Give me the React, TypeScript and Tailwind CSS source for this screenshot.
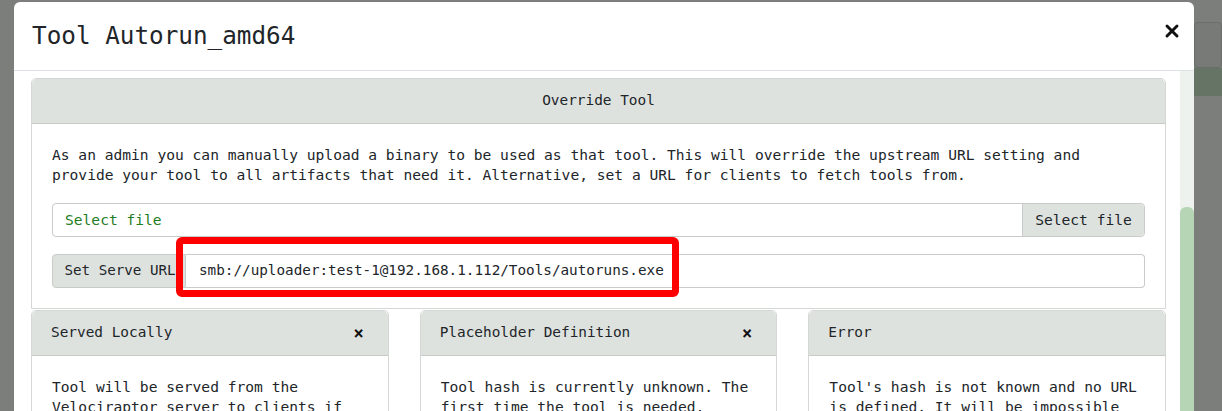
import { X } from "lucide-react";

const mono = { fontFamily: '"DejaVu Sans Mono", "Liberation Mono", monospace' };

const notes = [
  {
    title: "Served Locally",
    closable: true,
    text: "Tool will be served from the Velociraptor server to clients if needed. The client will fetch the tool",
  },
  {
    title: "Placeholder Definition",
    closable: true,
    text: "Tool hash is currently unknown. The first time the tool is needed, Velociraptor will download it",
  },
  {
    title: "Error",
    closable: false,
    text: "Tool's hash is not known and no URL is defined. It will be impossible to use this tool",
  },
];

function NoteCard({ title, closable, text }: { title: string; closable: boolean; text: string }) {
  return (
    <div className="flex-1 border border-[#d4d7d4] rounded-t-[5px] bg-white">
      <div className="h-[45px] flex items-center justify-between px-[19px] bg-[#dee2df] border-b border-[#c8cbc8] rounded-t-[5px]">
        <span className="text-[14.4px] text-[#212529]">{title}</span>
        {closable && <span className="text-[17px] font-bold leading-none text-[#111] mr-[5px]">×</span>}
      </div>
      <div className="px-[20px] pt-[21px] text-[14.6px] leading-[20px] text-[#212529]">{text}</div>
    </div>
  );
}

export default function App() {
  return (
    <div className="relative w-[1222px] h-[411px] overflow-hidden bg-[#7b7e7a]" style={mono}>
      <div className="absolute right-0 top-[22px] w-[28px] h-[46px] border border-[#6a6d69] rounded-[4px] bg-[#777a76]" />
      <div className="absolute right-0 top-[68px] w-[28px] h-[28px] bg-[#667466]" />
      <div className="relative ml-[14px] mt-[2px] w-[1180px] h-[409px] bg-white rounded-t-[6px] flex flex-col">
        <div className="h-[69px] shrink-0 flex items-center justify-between pl-[18px] pr-[12px] border-b border-[#dee2e6]">
          <h1 className="text-[24.3px] text-[#212529] leading-none">Tool Autorun_amd64</h1>
          <X size={20} strokeWidth={3.5} className="text-[#111] mb-[10px]" />
        </div>
        <div className="flex flex-1 min-h-0">
          <div className="flex-1 pl-[17px] pr-[14px] pt-[7px] overflow-hidden">
            <div className="border border-[#d4d7d4] rounded-t-[5px]">
              <div className="h-[45px] flex items-center justify-center bg-[#dee2df] border-b border-[#c8cbc8] rounded-t-[5px]">
                <span className="text-[14.4px] text-[#212529]">Override Tool</span>
              </div>
              <div className="px-[20px] pt-[21px] pb-[20px]">
                <p className="text-[14.6px] leading-[20px] text-[#212529]">
                  As an admin you can manually upload a binary to be used as that tool. This will override the upstream URL setting and provide your tool to all artifacts that need it. Alternative, set a URL for clients to fetch tools from.
                </p>
                <div className="mt-[18px] h-[34px] flex border border-[#c8cbc8] rounded-[4px]">
                  <div className="flex-1 flex items-center pl-[12px] text-[14.6px] text-[#1f7d1f]">Select file</div>
                  <div className="w-[122px] flex items-center justify-center bg-[#dee2df] border-l border-[#c8cbc8] rounded-r-[4px] text-[14.6px] text-[#212529]">
                    Select file
                  </div>
                </div>
                <div className="relative mt-[17px] h-[34px] flex">
                  <div className="w-[134px] flex items-center justify-center pl-[2px] bg-[#dee2df] border border-[#c8cbc8] rounded-l-[4px] text-[14.2px] text-[#212529]">
                    Set Serve URL
                  </div>
                  <div className="flex-1 flex items-center pl-[13px] border border-l-0 border-[#c8cbc8] rounded-r-[4px] text-[14.3px] text-[#212529]">
                    smb://uploader:test-1@192.168.1.112/Tools/autoruns.exe
                  </div>
                  <div className="absolute left-[124px] top-[-17px] w-[503px] h-[60px] border-[7px] border-[#ff0000] rounded-[6px]" />
                </div>
              </div>
            </div>
            <div className="flex gap-[31px] mt-[1px]">
              {notes.map((n) => (
                <NoteCard key={n.title} {...n} />
              ))}
            </div>
          </div>
          <div className="w-[14px] shrink-0 bg-[#eef2ee] flex flex-col">
            <div className="mt-[136px] flex-1 bg-[#b5d5b5] rounded-t-[6px]" />
          </div>
        </div>
      </div>
    </div>
  );
}
